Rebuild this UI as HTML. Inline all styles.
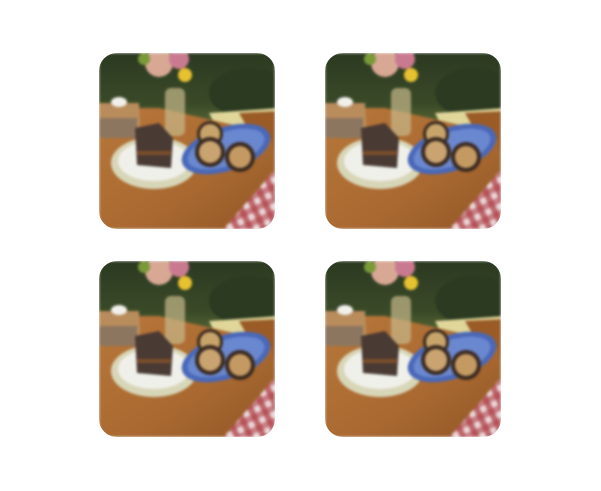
<!DOCTYPE html><html><head><style>
html,body{margin:0;padding:0;background:#fff;width:601px;height:491px;overflow:hidden}
.t{position:absolute;width:176px;height:176px;border-radius:18px;overflow:hidden}
.t svg{filter:blur(1.2px)}
</style></head><body>
<svg width="0" height="0" style="position:absolute"><defs>
<pattern id="chk" width="12" height="12" patternUnits="userSpaceOnUse" patternTransform="rotate(-25)"><rect width="12" height="12" fill="#e9d6d6"/><rect width="6" height="12" fill="#b0434b" opacity=".75"/><rect width="12" height="6" fill="#b0434b" opacity=".6"/></pattern>
<linearGradient id="bg" x1="0" y1="0" x2="0" y2="1"><stop offset="0" stop-color="#2a3820"/><stop offset=".3" stop-color="#3a4a28"/><stop offset=".5" stop-color="#6d7a3e"/></linearGradient>
<linearGradient id="wood" x1="0" y1="0" x2="1" y2="1"><stop offset="0" stop-color="#b8773a"/><stop offset=".6" stop-color="#a86830"/><stop offset="1" stop-color="#8e5526"/></linearGradient>
<g id="ph">
<rect x="-5" y="-5" width="186" height="186" fill="url(#bg)"/>
<ellipse cx="150" cy="40" rx="40" ry="25" fill="#2b3a20"/>
<polygon points="110,60 180,55 180,120 150,140" fill="#e0d69a"/>
<polygon points="140,60 180,58 180,100 160,95" fill="#9a5b27"/>
<polygon points="-5,55 60,55 170,80 180,112 120,181 -5,181" fill="url(#wood)"/>
<polygon points="180,112 120,181 180,181" fill="url(#chk)"/>
<polygon points="-5,50 40,50 42,85 -5,85" fill="#b98c5c"/>
<rect x="0" y="65" width="38" height="20" fill="#8c7660"/>
<ellipse cx="20" cy="49" rx="8" ry="5" fill="#f2f0ea"/>
<rect x="66" y="35" width="20" height="48" rx="6" fill="#c8b88a" opacity=".7"/>
<circle cx="60" cy="10" r="14" fill="#d8a895"/><circle cx="80" cy="6" r="10" fill="#c97a90"/><circle cx="86" cy="22" r="7" fill="#e6c130"/><circle cx="45" cy="6" r="6" fill="#7a9a3a"/>
<ellipse cx="55" cy="110" rx="43" ry="26" fill="#d8d6b8"/><ellipse cx="55" cy="108" rx="36" ry="20" fill="#f0f0ea"/>
<polygon points="36,75 60,70 74,85 72,115 38,112" fill="#4a3a34"/>
<rect x="38" y="98" width="34" height="4" fill="#7a4e2a"/>
<ellipse cx="127" cy="96" rx="46" ry="22" transform="rotate(-18 127 96)" fill="#4a68b8"/>
<ellipse cx="127" cy="96" rx="40" ry="17" transform="rotate(-18 127 96)" fill="#6a88d0"/>
<circle cx="111" cy="81" r="13" fill="#3a2a20"/><circle cx="111" cy="81" r="10" fill="#c7a46a"/>
<circle cx="111" cy="99" r="15" fill="#3a2a20"/><circle cx="111" cy="99" r="11" fill="#c9a470"/>
<circle cx="141" cy="104" r="15" fill="#3a2a20"/><circle cx="141" cy="104" r="11" fill="#c49a62"/>
</g></defs></svg>
<div class="t" style="left:99px;top:53px"><svg width="176" height="176"><use href="#ph"/></svg></div>
<div class="t" style="left:325px;top:53px"><svg width="176" height="176"><use href="#ph"/></svg></div>
<div class="t" style="left:99px;top:261px"><svg width="176" height="176"><use href="#ph"/></svg></div>
<div class="t" style="left:325px;top:261px"><svg width="176" height="176"><use href="#ph"/></svg></div>
</body></html>
